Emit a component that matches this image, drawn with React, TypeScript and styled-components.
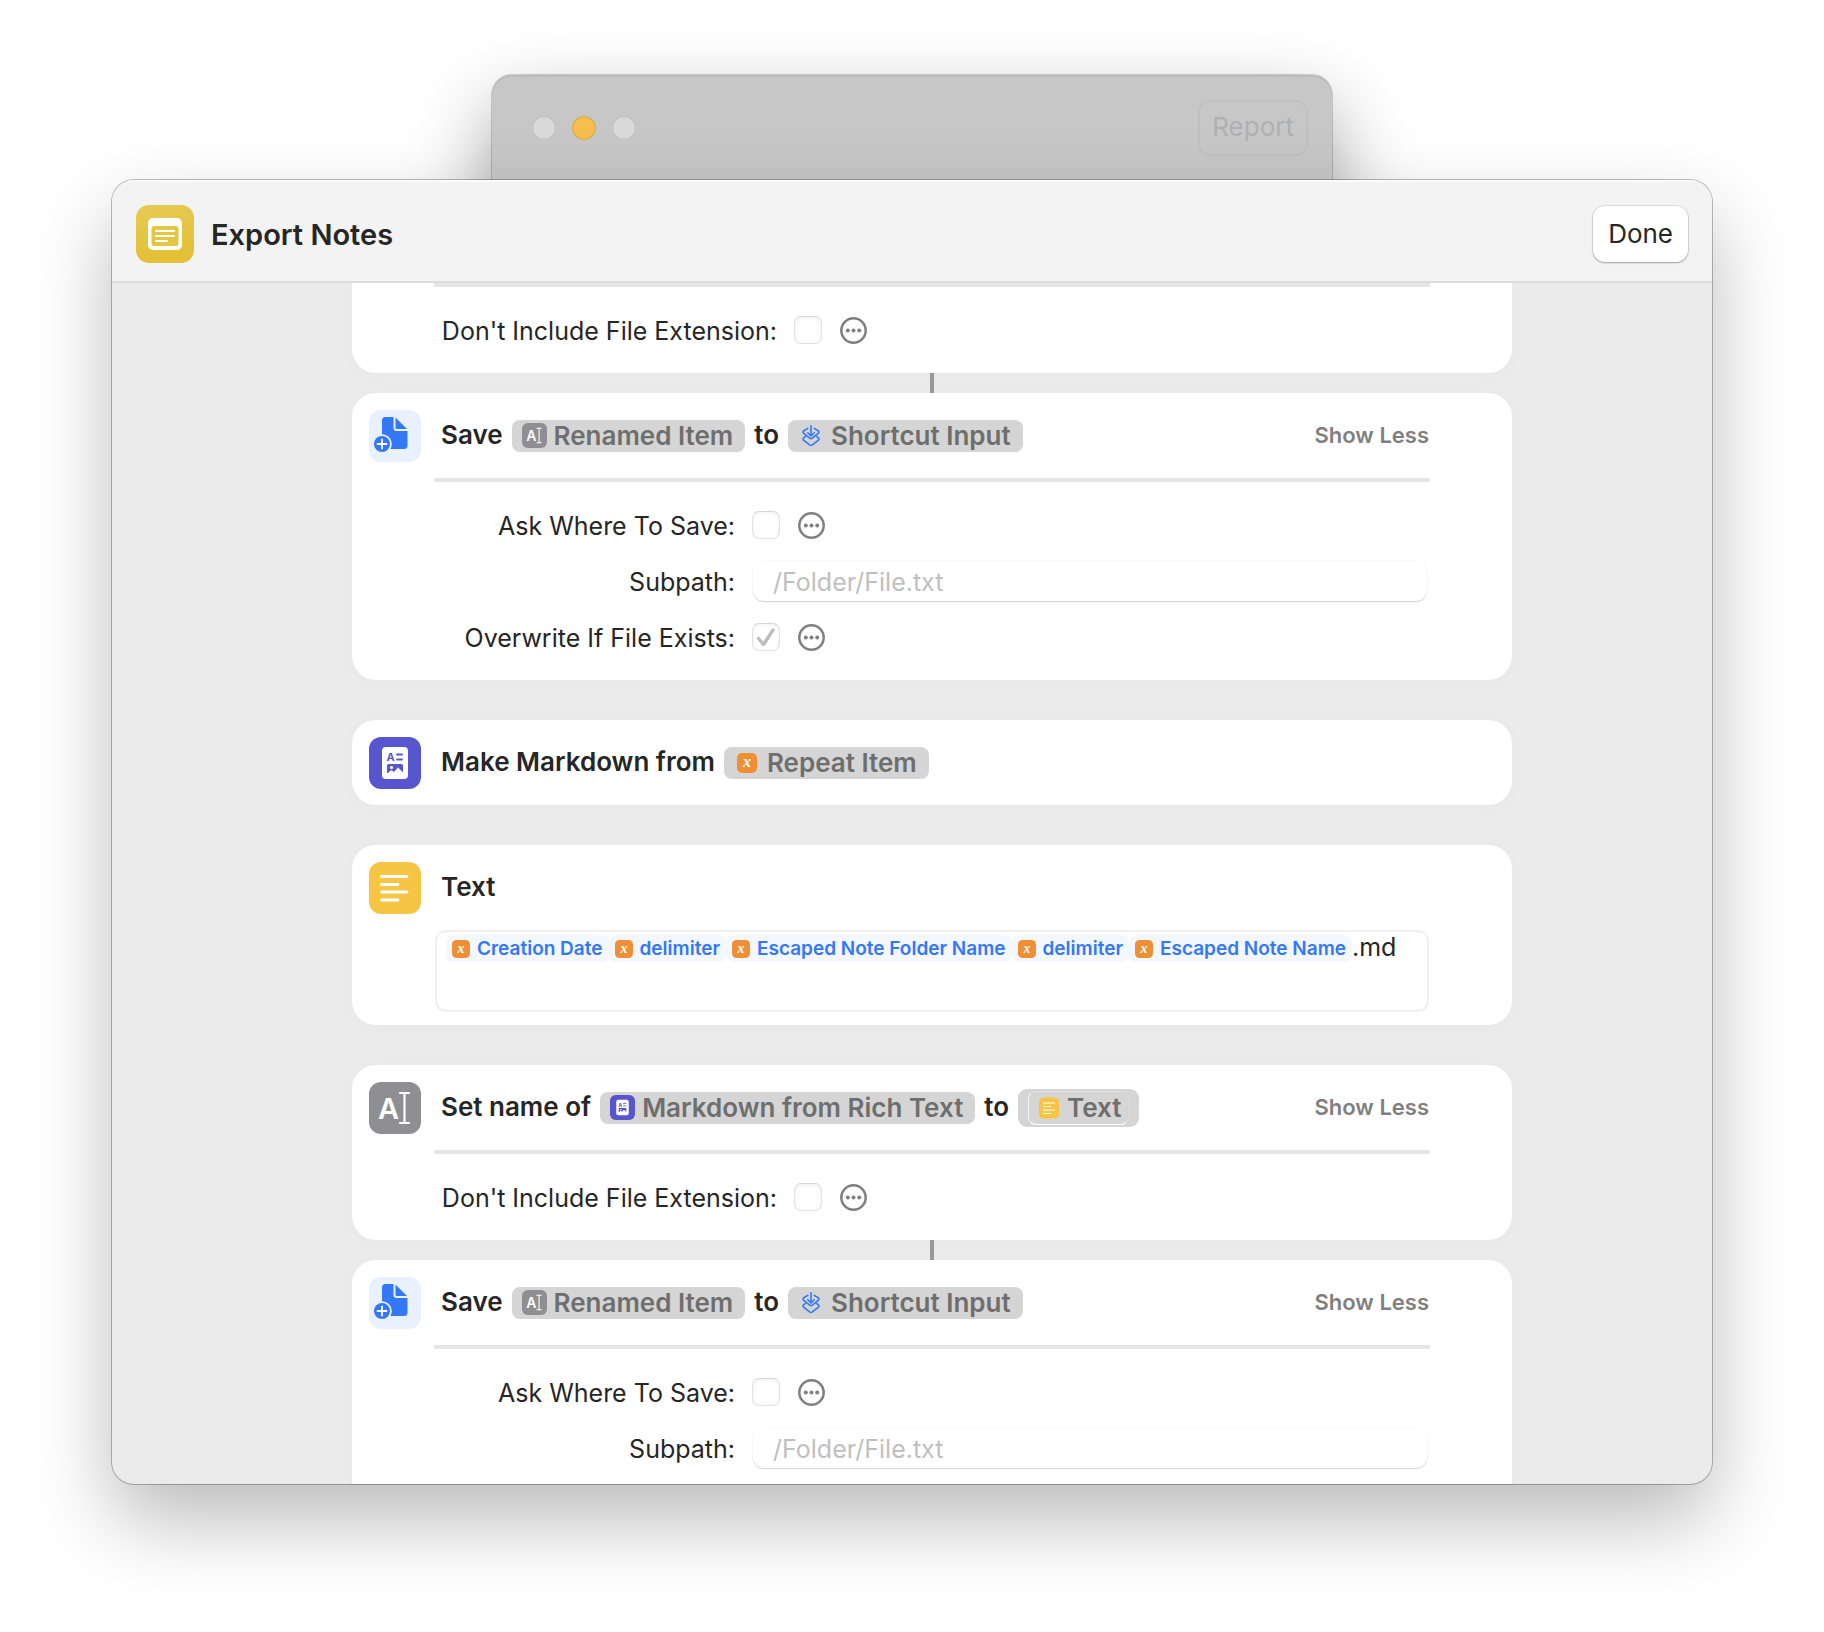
import React, { useId } from "react";
import styled, { createGlobalStyle, css } from "styled-components";

const GlobalStyle = createGlobalStyle`
  *, *::before, *::after { box-sizing: border-box; }
  html, body { margin: 0; background: #ffffff; }
  body {
    font-family: Inter, "Liberation Sans", sans-serif;
    font-size: 25px;
    color: #262626;
  }
  button, input {
    font: inherit;
    color: inherit;
    margin: 0;
    padding: 0;
    border: 0;
    background: none;
  }
`;

/* ---------- windows ---------- */

const Desktop = styled.div`
  height: 100vh;
  padding: 75px 112px 148px;
  display: grid;
  overflow: hidden;
`;

const BackWindow = styled.section`
  grid-area: 1 / 1;
  justify-self: center;
  width: 840px;
  max-width: 100%;
  height: 70%;
  border-radius: 20px;
  background: #c7c7c7;
  box-shadow: 0 0 0 1px rgba(0, 0, 0, 0.18), inset 0 2px 0 rgba(0, 0, 0, 0.05),
    0 36px 80px rgba(0, 0, 0, 0.4);
`;

const BackBar = styled.div`
  display: flex;
  align-items: center;
  justify-content: space-between;
  height: 105px;
  padding: 0 24px 0 40px;
`;

const Lights = styled.div`
  display: flex;
  gap: 16px;
`;

const Light = styled.button<{ $active?: boolean }>`
  width: 24px;
  height: 24px;
  border-radius: 50%;
  background: ${(p) => (p.$active ? "#f5be4f" : "#d9d9d8")};
  border: 1px solid ${(p) => (p.$active ? "#dba33c" : "#bdbdbd")};
`;

const ReportButton = styled.button`
  height: 56px;
  padding: 0 12px 2px;
  border: 2px solid rgba(0, 0, 0, 0.03);
  border-radius: 12px;
  font-size: 26px;
  color: #b0b0b0;
`;

const Window = styled.main`
  grid-area: 1 / 1;
  position: relative;
  margin-top: 105px;
  min-height: 0;
  display: flex;
  flex-direction: column;
  overflow: hidden;
  border-radius: 22px;
  background: #ebebeb;
  box-shadow: 0 0 0 1px rgba(0, 0, 0, 0.26), 0 36px 80px rgba(0, 0, 0, 0.27);
`;

const Header = styled.header`
  flex: none;
  display: flex;
  align-items: center;
  gap: 17px;
  height: 103px;
  padding: 7px 24px 0;
  background: #f3f3f3;
  border-bottom: 2px solid #dcdcdc;
  box-shadow: inset 0 2px 0 #fbfbfb;
  svg { display: block; }
`;

const Heading = styled.h1`
  flex: 1;
  margin: 0;
  font-size: 29px;
  font-weight: 600;
`;

const DoneButton = styled.button`
  height: 56px;
  padding: 0 15px 2px;
  border-radius: 12px;
  background: #ffffff;
  font-size: 26px;
  box-shadow: 0 0 0 1px rgba(0, 0, 0, 0.08), 0 1px 2px rgba(0, 0, 0, 0.3);
`;

const Actions = styled.div`
  flex: 1;
  min-height: 0;
  overflow-y: auto;
  scrollbar-width: none;
  padding: 0 200px 0 240px;
`;

/* ---------- cards ---------- */

const cardRadius = {
  whole: "24px",
  tail: "0 0 24px 24px",
  head: "24px 24px 0 0",
};

type CardPart = keyof typeof cardRadius;

const Card = styled.article<{ $part?: CardPart }>`
  border-radius: ${(p) => cardRadius[p.$part ?? "whole"]};
  background: #ffffff;
  box-shadow: 0 2px 16px rgba(0, 0, 0, 0.02);
`;

const TextCard = styled(Card)`
  padding-bottom: 13px;
`;

const Spacer = styled.div`
  height: 40px;
`;

const Connector = styled.div`
  width: 4px;
  height: 20px;
  margin: 0 auto;
  background: #98989f;
`;

const CardHeader = styled.div`
  display: flex;
  align-items: center;
  height: 85px;
  padding: 0 83px 0 17px;
  gap: 20px;
  > svg { display: block; flex: none; }
`;

const Sentence = styled.div`
  flex: 1;
  display: flex;
  align-items: center;
  gap: 9px;
  font-size: 26px;
  font-weight: 600;
  white-space: nowrap;
`;

const Word = styled.span`
  padding-bottom: 2px;
`;

const pillLook = css`
  display: inline-flex;
  align-items: center;
  gap: 7px;
  font-weight: 600;
  color: #6e6e6e;
  svg { display: block; flex: none; }
`;

const Pill = styled.button`
  ${pillLook}
  height: 32px;
  padding: 0 12px 0 10px;
  border-radius: 8px;
  background: #d5d5d5;
`;

const NestedPill = styled.button`
  height: 38px;
  padding: 0 10px;
  display: flex;
  align-items: center;
  border-radius: 9px;
  background: #d5d5d5;
`;

const NestedPillInner = styled.span`
  ${pillLook}
  height: 34px;
  padding: 0 7px;
  gap: 5px;
  border: 1px solid;
  border-color: #dfdfdf #dadada #ffffff #f6f6f6;
  border-radius: 8px;
`;

const ShowLess = styled.button`
  padding-bottom: 2px;
  font-size: 22px;
  font-weight: 600;
  color: #7f7f7f;
`;

const Divider = styled.hr`
  height: 4px;
  margin: 0 82px;
  border: 0;
  background: #e5e5e5;
`;

const Options = styled.div<{ $labels?: number }>`
  display: grid;
  grid-template-columns: minmax(${(p) => p.$labels ?? 301}px, max-content) 1fr;
  grid-auto-rows: 56px;
  align-items: center;
  column-gap: 17px;
  padding: 15px 84px 15px 82px;
`;

const OptionLabel = styled.label`
  justify-self: end;
  padding-top: 2px;
`;

const Controls = styled.div`
  display: flex;
  align-items: center;
  gap: 18px;
`;

const Tick = styled.span`
  display: grid;
  svg {
    grid-area: 1 / 1;
    place-self: center;
    visibility: hidden;
    pointer-events: none;
  }
  input:checked + svg { visibility: visible; }
`;

const TickBox = styled.input`
  grid-area: 1 / 1;
  appearance: none;
  width: 28px;
  height: 28px;
  border: 1px solid #e2e2e2;
  border-top-color: #d6d6d6;
  border-radius: 7px;
  background: #ffffff;
  box-shadow: inset 0 1px 4px rgba(0, 0, 0, 0.07);
`;

const MoreButton = styled.button`
  display: block;
  svg { display: block; }
`;

const PathInput = styled.input`
  justify-self: center;
  width: calc(100% - 2px);
  height: 40px;
  padding: 2px 20px 0;
  border-radius: 11px;
  background: #ffffff;
  box-shadow: 0 0 0 1px rgba(0, 0, 0, 0.02), 0 1px 1px rgba(0, 0, 0, 0.16);
  &::placeholder { color: #bfbfbf; opacity: 1; }
`;

const TokenField = styled.div`
  display: flex;
  align-items: flex-start;
  height: 82px;
  margin: 0 83px;
  padding: 3px 9px;
  border: 2px solid #f0f0f0;
  border-radius: 11px;
  white-space: nowrap;
  line-height: 24px;
`;

const Token = styled.span`
  display: inline-flex;
  align-items: center;
  gap: 7px;
  height: 27px;
  padding: 0 6px;
  border-radius: 7px;
  background: #f3f7ff;
  color: #3478f6;
  font-size: 19px;
  font-weight: 600;
  svg { display: block; flex: none; }
`;

/* ---------- drawings ---------- */

const NotesAppIcon = () => (
  <svg width="58" height="58" viewBox="0 0 58 58" aria-hidden="true">
    <defs>
      <linearGradient id="notes" x1="0" y1="0" x2="0.2" y2="1">
        <stop offset="0" stopColor="#e6ca55" />
        <stop offset="1" stopColor="#e3c035" />
      </linearGradient>
    </defs>
    <rect width="58" height="58" rx="13" fill="url(#notes)" />
    <rect x="12" y="13" width="34" height="32" rx="5" fill="#fff" />
    <rect x="15.500" y="21" width="27" height="20" rx="2.500" fill="#e5c643" />
    <g stroke="#fff" strokeWidth="2" strokeLinecap="round">
      <path d="M20 26h18M20 31h18M20 36h11" />
    </g>
  </svg>
);

const RenameIcon = ({ size }: { size: number }) => (
  <svg width={size} height={size} viewBox="0 0 52 52" aria-hidden="true">
    <rect width="52" height="52" rx="12" fill="#8e8e93" />
    <text x="19.500" y="37" fontSize="29" fontWeight="600" textAnchor="middle" fill="#fff">A</text>
    <path d="M31 11h9M31 41h9M35.500 11v30" fill="none" stroke="#fff" strokeWidth="2.200" strokeLinecap="round" />
  </svg>
);

const SaveFileIcon = () => (
  <svg width="52" height="52" viewBox="0 0 52 52" aria-hidden="true">
    <rect width="52" height="52" rx="12" fill="#e9f1fe" />
    <path d="M13 10.500a3.500 3.500 0 0 1 3.500-3.500H24.500V18a3 3 0 0 0 3 3H38.500V35.500a3.500 3.500 0 0 1-3.500 3.500H13Z" fill="#3478f6" />
    <path d="M26.500 7.500L38 19H27.500a1 1 0 0 1-1-1Z" fill="#3478f6" />
    <circle cx="13" cy="34" r="9.800" fill="#e9f1fe" />
    <circle cx="13" cy="34" r="8" fill="#3478f6" />
    <path d="M13 29.500v9M8.500 34h9" stroke="#fff" strokeWidth="1.800" strokeLinecap="round" />
  </svg>
);

const MarkdownIcon = ({ size }: { size: number }) => (
  <svg width={size} height={size} viewBox="0 0 52 52" aria-hidden="true">
    <rect width="52" height="52" rx="12" fill="#5856ce" />
    <rect x="13" y="10" width="26" height="32" rx="4" fill="#fff" />
    <text x="21.500" y="24" fontSize="11" fontWeight="700" textAnchor="middle" fill="#5856ce">A</text>
    <path d="M28 17.500h5M28 22.500h5" stroke="#5856ce" strokeWidth="1.800" strokeLinecap="round" />
    <path d="M19.500 27h13a1.500 1.500 0 0 1 1.500 1.500v7L29 30.500l-4 4.500-2.500-2-4.500 3.500v-8a1.500 1.500 0 0 1 1.500-1.500Z" fill="#5856ce" />
    <circle cx="22.500" cy="30.500" r="1.600" fill="#fff" />
  </svg>
);

const TextIcon = () => (
  <svg width="52" height="52" viewBox="0 0 52 52" aria-hidden="true">
    <rect width="52" height="52" rx="12" fill="#f6c544" />
    <path d="M12.500 14.500h25.500M12.500 22.500h16.500M12.500 30h25.500M12.500 38h16.500" stroke="#fff" strokeWidth="2.800" strokeLinecap="round" />
  </svg>
);

const TextPillIcon = () => (
  <svg width="26" height="26" viewBox="0 0 26 26" aria-hidden="true">
    <rect x="3" y="2.500" width="20" height="21" rx="4.500" fill="#f6c544" />
    <path d="M7.500 8h11M7.500 11.500h7M7.500 15h11M7.500 18.500h7" stroke="#fff" strokeWidth="1.200" strokeLinecap="round" />
  </svg>
);

const ShortcutInputIcon = () => (
  <svg width="26" height="26" viewBox="0 0 26 26" aria-hidden="true">
    <g fill="none" stroke="#3478f6" strokeWidth="1.600" strokeLinecap="round" strokeLinejoin="round">
      <path d="M13 2.800v10M9.800 9.800l3.200 3.200 3.200-3.200" />
      <path d="M9.800 5.400L5.800 7.800a1.500 1.500 0 0 0 0 2.600L12 15.300a1.800 1.800 0 0 0 2 0l6.200-4.900a1.500 1.500 0 0 0 0-2.600L16.200 5.400" />
      <path d="M7.600 13.400l-1.800 1.300a1.500 1.500 0 0 0 0 2.600L12 22.200a1.800 1.800 0 0 0 2 0l6.200-4.900a1.500 1.500 0 0 0 0-2.600l-1.800-1.300" />
    </g>
  </svg>
);

const VariableIcon = ({ box, size }: { box: number; size: number }) => (
  <svg width={box} height={box} viewBox={`0 0 ${box} ${box}`} aria-hidden="true">
    <rect x={(box - size) / 2} y={(box - size) / 2} width={size} height={size} rx={size / 4} fill="#ee8f35" />
    <text
      x={box / 2}
      y={box / 2 + size / 5}
      fontFamily="'Liberation Serif', serif"
      fontStyle="italic"
      fontWeight="700"
      fontSize={Math.round(size * 0.8)}
      textAnchor="middle"
      fill="#fff"
    >
      x
    </text>
  </svg>
);

const MoreIcon = () => (
  <svg width="27" height="27" viewBox="0 0 27 27" aria-hidden="true">
    <circle cx="13.500" cy="13.500" r="12.200" fill="none" stroke="#7f7f7f" strokeWidth="2.500" />
    <g fill="#7f7f7f">
      <circle cx="7.800" cy="13.500" r="2" />
      <circle cx="13.500" cy="13.500" r="2" />
      <circle cx="19.200" cy="13.500" r="2" />
    </g>
  </svg>
);

/* ---------- pieces ---------- */

const CheckOption = ({ label, checked }: { label: string; checked?: boolean }) => {
  const id = useId();
  return (
    <>
      <OptionLabel htmlFor={id}>{label}</OptionLabel>
      <Controls>
        <Tick>
          <TickBox id={id} type="checkbox" defaultChecked={checked} />
          <svg width="22" height="22" viewBox="0 0 22 22" aria-hidden="true">
            <path d="M3.500 12.500l5 6L18 4" fill="none" stroke="#bdbdbd" strokeWidth="3.400" strokeLinecap="round" strokeLinejoin="round" />
          </svg>
        </Tick>
        <MoreButton type="button" aria-label="More options">
          <MoreIcon />
        </MoreButton>
      </Controls>
    </>
  );
};

const PathOption = ({ label, placeholder }: { label: string; placeholder: string }) => {
  const id = useId();
  return (
    <>
      <OptionLabel htmlFor={id}>{label}</OptionLabel>
      <PathInput id={id} type="text" placeholder={placeholder} />
    </>
  );
};

const SaveCard = ({ part = "whole" }: { part?: CardPart }) => (
  <Card $part={part}>
    <CardHeader>
      <SaveFileIcon />
      <Sentence>
        <Word>Save</Word>
        <Pill type="button">
          <RenameIcon size={25} />
          Renamed Item
        </Pill>
        <Word>to</Word>
        <Pill type="button">
          <ShortcutInputIcon />
          Shortcut Input
        </Pill>
      </Sentence>
      <ShowLess type="button">Show Less</ShowLess>
    </CardHeader>
    <Divider />
    <Options>
      <CheckOption label="Ask Where To Save:" />
      <PathOption label="Subpath:" placeholder="/Folder/File.txt" />
      {part === "whole" && <CheckOption label="Overwrite If File Exists:" checked />}
    </Options>
  </Card>
);

const NAME_TOKENS = ["Creation Date", "delimiter", "Escaped Note Folder Name", "delimiter", "Escaped Note Name"];

export default function App() {
  return (
    <>
      <GlobalStyle />
      <Desktop>
        <BackWindow>
          <BackBar>
            <Lights>
              <Light type="button" aria-label="Close" />
              <Light type="button" aria-label="Minimize" $active />
              <Light type="button" aria-label="Zoom" />
            </Lights>
            <ReportButton type="button">Report</ReportButton>
          </BackBar>
        </BackWindow>

        <Window>
          <Header>
            <NotesAppIcon />
            <Heading>Export Notes</Heading>
            <DoneButton type="button">Done</DoneButton>
          </Header>

          <Actions>
            <Card $part="tail">
              <Divider />
              <Options $labels={343}>
                <CheckOption label="Don't Include File Extension:" />
              </Options>
            </Card>
            <Connector />
            <SaveCard />
            <Spacer />

            <Card>
              <CardHeader>
                <MarkdownIcon size={52} />
                <Sentence>
                  <Word>Make Markdown from</Word>
                  <Pill type="button">
                    <VariableIcon box={26} size={20} />
                    Repeat Item
                  </Pill>
                </Sentence>
              </CardHeader>
            </Card>
            <Spacer />

            <TextCard>
              <CardHeader>
                <TextIcon />
                <Sentence>
                  <Word>Text</Word>
                </Sentence>
              </CardHeader>
              <TokenField role="textbox" aria-label="Text" contentEditable suppressContentEditableWarning spellCheck={false}>
                {NAME_TOKENS.map((name, i) => (
                  <Token key={i} contentEditable={false}>
                    <VariableIcon box={18} size={18} />
                    {name}
                  </Token>
                ))}
                .md
              </TokenField>
            </TextCard>
            <Spacer />

            <Card>
              <CardHeader>
                <RenameIcon size={52} />
                <Sentence>
                  <Word>Set name of</Word>
                  <Pill type="button">
                    <MarkdownIcon size={25} />
                    Markdown from Rich Text
                  </Pill>
                  <Word>to</Word>
                  <NestedPill type="button">
                    <NestedPillInner>
                      <TextPillIcon />
                      Text
                    </NestedPillInner>
                  </NestedPill>
                </Sentence>
                <ShowLess type="button">Show Less</ShowLess>
              </CardHeader>
              <Divider />
              <Options $labels={343}>
                <CheckOption label="Don't Include File Extension:" />
              </Options>
            </Card>
            <Connector />
            <SaveCard part="head" />
          </Actions>
        </Window>
      </Desktop>
    </>
  );
}
